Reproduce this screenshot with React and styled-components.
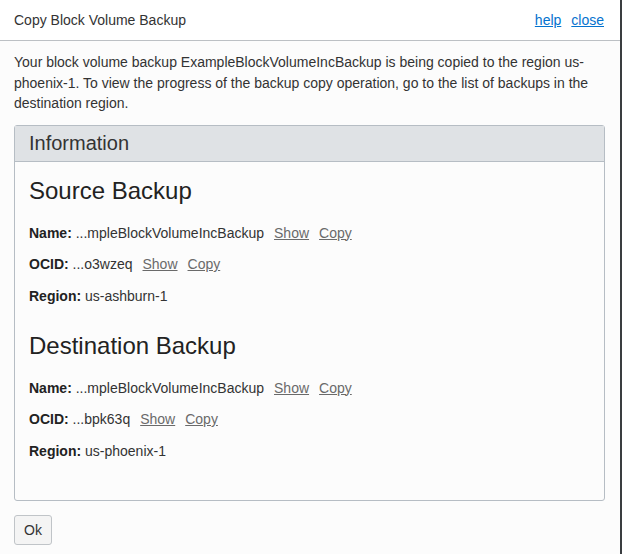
import React from "react";
import styled, { createGlobalStyle } from "styled-components";

const Global = createGlobalStyle`
  html, body {
    margin: 0;
    padding: 0;
    background: #fcfcfc;
  }
  body {
    font-family: "Liberation Sans", Arial, sans-serif;
    color: #333;
  }
`;

const Dialog = styled.div`
  width: 622px;
  height: 554px;
  box-sizing: border-box;
  background: #fcfcfc;
  border-right: 2px solid #3a3d40;
  display: flex;
  flex-direction: column;
  overflow: hidden;
`;

const Header = styled.div`
  height: 40px;
  flex: none;
  background: #fff;
  border-bottom: 1px solid #bcc0c4;
  display: flex;
  align-items: center;
  justify-content: space-between;
  padding: 0 16px 0 14px;
`;

const Title = styled.div`
  font-size: 14px;
  color: #333;
`;

const HeaderLinks = styled.div`
  display: flex;
  gap: 10px;
`;

const HeaderLink = styled.a`
  font-size: 14px;
  color: #0572ce;
  text-decoration: underline;
  cursor: pointer;
`;

const Body = styled.div`
  padding: 11px 15px 0 14px;
  display: flex;
  flex-direction: column;
`;

const Intro = styled.p`
  margin: 0 0 11px;
  font-size: 14px;
  line-height: 20.5px;
  color: #333;
`;

const Panel = styled.div`
  border: 1px solid #b6bdc4;
  border-radius: 3px;
  background: #fcfcfc;
  height: 376px;
  box-sizing: border-box;
`;

const PanelHeader = styled.div`
  height: 35px;
  background: #dfe2e5;
  border-bottom: 1px solid #b6bdc4;
  display: flex;
  align-items: center;
  padding: 0 14px;
  font-size: 20px;
  color: #333;
`;

const PanelBody = styled.div`
  padding: 15px 14px 0;
`;

const Section = styled.div`
  margin-bottom: ${p => (p.last ? 0 : 26)}px;
`;

const SectionTitle = styled.h2`
  margin: 0 0 18px;
  font-size: 24px;
  font-weight: normal;
  line-height: 28px;
  color: #222;
`;

const Row = styled.div`
  display: flex;
  align-items: baseline;
  gap: 10px;
  font-size: 14px;
  line-height: 20px;
  margin-bottom: 11.5px;
  color: #333;
`;

const Field = styled.span`
  b {
    font-weight: bold;
    color: #222;
  }
`;

const SmallLink = styled.a`
  color: #6a6a6a;
  text-decoration: underline;
  cursor: pointer;
`;

const Footer = styled.div`
  padding: 14px 14px 0;
`;

const Button = styled.button`
  height: 30px;
  padding: 0 9px;
  font-family: "Liberation Sans", Arial, sans-serif;
  font-size: 14px;
  color: #333;
  background: #f4f4f4;
  border: 1px solid #c0c4c8;
  border-radius: 3px;
`;

const sections = [
  {
    title: "Source Backup",
    name: "...mpleBlockVolumeIncBackup",
    ocid: "...o3wzeq",
    region: "us-ashburn-1"
  },
  {
    title: "Destination Backup",
    name: "...mpleBlockVolumeIncBackup",
    ocid: "...bpk63q",
    region: "us-phoenix-1"
  }
];

const Detail = ({ label, value, actions }) => (
  <Row>
    <Field>
      <b>{label}:</b> {value}
    </Field>
    {actions && (
      <>
        <SmallLink>Show</SmallLink>
        <SmallLink>Copy</SmallLink>
      </>
    )}
  </Row>
);

export default function App() {
  return (
    <Dialog>
      <Global />
      <Header>
        <Title>Copy Block Volume Backup</Title>
        <HeaderLinks>
          <HeaderLink>help</HeaderLink>
          <HeaderLink>close</HeaderLink>
        </HeaderLinks>
      </Header>
      <Body>
        <Intro>
          Your block volume backup ExampleBlockVolumeIncBackup is being copied
          to the region us-phoenix-1. To view the progress of the backup copy
          operation, go to the list of backups in the destination region.
        </Intro>
        <Panel>
          <PanelHeader>Information</PanelHeader>
          <PanelBody>
            {sections.map((s, i) => (
              <Section key={s.title} last={i === sections.length - 1}>
                <SectionTitle>{s.title}</SectionTitle>
                <Detail label="Name" value={s.name} actions />
                <Detail label="OCID" value={s.ocid} actions />
                <Detail label="Region" value={s.region} />
              </Section>
            ))}
          </PanelBody>
        </Panel>
      </Body>
      <Footer>
        <Button>Ok</Button>
      </Footer>
    </Dialog>
  );
}
